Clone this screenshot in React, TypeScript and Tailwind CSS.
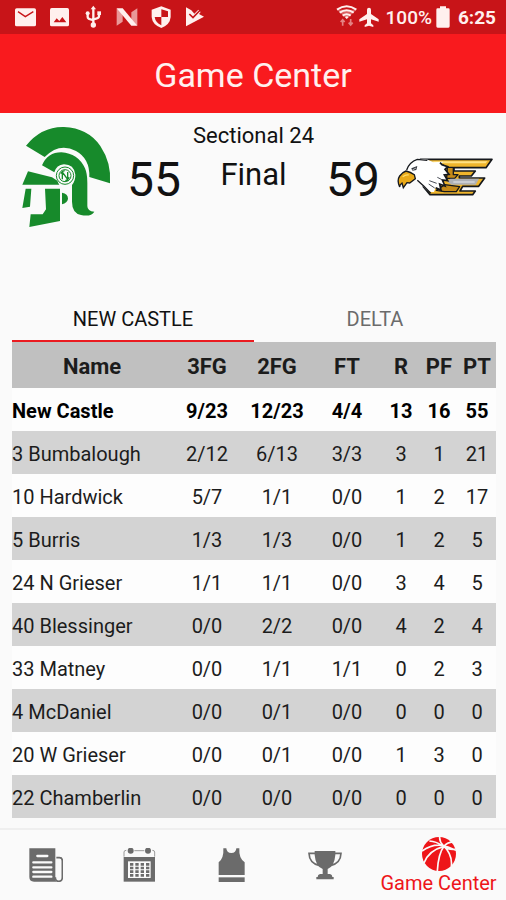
import type { ReactNode } from "react";

type StatLine = {
  name: string;
  stats: string[];
};

const columns = ["3FG", "2FG", "FT", "R", "PF", "PT"];

const team: StatLine = {
  name: "New Castle",
  stats: ["9/23", "12/23", "4/4", "13", "16", "55"],
};

const players: StatLine[] = [
  { name: "3 Bumbalough", stats: ["2/12", "6/13", "3/3", "3", "1", "21"] },
  { name: "10 Hardwick", stats: ["5/7", "1/1", "0/0", "1", "2", "17"] },
  { name: "5 Burris", stats: ["1/3", "1/3", "0/0", "1", "2", "5"] },
  { name: "24 N Grieser", stats: ["1/1", "1/1", "0/0", "3", "4", "5"] },
  { name: "40 Blessinger", stats: ["0/0", "2/2", "0/0", "4", "2", "4"] },
  { name: "33 Matney", stats: ["0/0", "1/1", "1/1", "0", "2", "3"] },
  { name: "4 McDaniel", stats: ["0/0", "0/1", "0/0", "0", "0", "0"] },
  { name: "20 W Grieser", stats: ["0/0", "0/1", "0/0", "1", "3", "0"] },
  { name: "22 Chamberlin", stats: ["0/0", "0/0", "0/0", "0", "0", "0"] },
];

function StatusIcon({ children }: { children: ReactNode }) {
  return (
    <svg viewBox="0 0 72 72" className="h-6 w-6 shrink-0" fill="currentColor" aria-hidden="true">
      {children}
    </svg>
  );
}

function StatusBar() {
  return (
    <div className="flex h-[34px] items-center justify-between bg-[#c81418] pr-[10px] pl-[13px] text-[#fff0ee]">
      <div className="flex items-center gap-[10px]">
        <StatusIcon>
          <rect x="6" y="10" width="63" height="54" rx="5" />
          <path d="M15 20l22 15 24-15" fill="none" stroke="#c81418" strokeWidth="4" />
        </StatusIcon>
        <StatusIcon>
          <rect x="9" y="9" width="57" height="55" rx="5" />
          <path d="M20 52l9-12 8 8 9-12 12 16z" fill="#c81418" />
        </StatusIcon>
        <StatusIcon>
          <path d="M37 2l8 11H29z" />
          <circle cx="37" cy="60" r="8" />
          <circle cx="20" cy="25" r="6" />
          <rect x="49" y="19" width="11" height="11" />
          <path d="M37 10v50M20 28v8q0 7 17 9M54 28v6q0 7-17 9" fill="none" stroke="currentColor" strokeWidth="7" />
        </StatusIcon>
        <StatusIcon>
          <path d="M5 10v52l18-12V22zM67 10v52L49 50V22z" opacity="0.6" />
          <path d="M5 10h18l44 52H49z" />
        </StatusIcon>
        <StatusIcon>
          <path d="M37 4l28 10v22q-2 23-28 33Q10 59 8 36V14z" />
          <path d="M37 13v23h20V19zM17 36h20v25Q19 52 17 36z" fill="#c81418" />
        </StatusIcon>
        <StatusIcon>
          <path d="M9 7l16 9 9 10 12-12 7 7-5 6 15 8L9 64z" />
          <path d="M19 27l11 11 22-23" fill="none" stroke="#c81418" strokeWidth="5" />
        </StatusIcon>
      </div>
      <div className="flex items-center">
        <svg viewBox="0 0 66 72" className="h-6 w-[22px]" fill="none" stroke="currentColor" strokeWidth="6" aria-hidden="true">
          <path d="M3 14h58L32 42z" fill="currentColor" stroke="none" opacity="0.35" />
          <path d="M3 14q29-21 58 0M11 23q21-15 42 0M20 32q12-9 24 0" />
          <path d="M27 36q6-5 11 0l-6 6z" fill="currentColor" stroke="none" />
          <path d="M20 62V44m-6 7l6-7 6 7M44 42v18m-6-7l6 7 6-7" strokeWidth="5" opacity="0.5" />
        </svg>
        <svg viewBox="0 0 66 72" className="h-6 w-[22px]" fill="currentColor" aria-hidden="true">
          <path d="M33 8q6 0 6 6v13l23 16v7l-23-7v12l7 6v5l-13-4-13 4v-5l7-6V43L4 50v-7l23-16V14q0-6 6-6z" />
        </svg>
        <span className="ml-[6px] pt-[2px] text-[19px] leading-6 font-medium">100%</span>
        <svg viewBox="0 0 42 66" className="mx-1 h-[22px] w-[14px]" fill="currentColor" aria-hidden="true">
          <path d="M12 1h18v6h7q4 0 4 4v50q0 4-4 4H5q-4 0-4-4V11q0-4 4-4h7z" />
        </svg>
        <span className="ml-1 pt-[2px] text-[19px] leading-6 font-bold">6:25</span>
      </div>
    </div>
  );
}

function TrojanLogo() {
  return (
    <svg viewBox="0 0 300 336" className="h-[112px] w-[100px] shrink-0" fill="#178a2b" role="img" aria-label="New Castle Trojans">
      <path d="M33 77Q80 19 147 21q72 3 109 57 34 51 29 112l-62-19q2-55-40-78-50-27-94 18z" />
      <path d="M81 136Q98 97 139 97q50 3 71 48 7 16 7 43v70q0 16 21 17-10 16-40 10-27-6-27-40v-50q11-15 10-31-4-31-34-31-23 2-29 24z" />
      <path d="M39 154l72 18 16 10q2 6 6 12H22z" />
      <path d="M32 206h17l-4 54-23 4zM90 206h45v97l-92 18 4-38h36l10-15z" />
      <path d="M141 218q18 3 18 18-2 13-18 17z" />
      <circle cx="150" cy="167" r="26" fill="none" stroke="#178a2b" strokeWidth="3" />
      <circle cx="150" cy="167" r="18" fill="none" stroke="#178a2b" strokeWidth="3" />
      <path d="M142 178v-22l16 22v-22M137 161q5-8 12-9M163 172q-5 9-12 10" fill="none" stroke="#178a2b" strokeWidth="4" />
    </svg>
  );
}

function EagleLogo() {
  return (
    <svg viewBox="0 0 330 162" className="h-[54px] w-[110px] shrink-0" role="img" aria-label="Delta Eagles">
      <g stroke="#15181d" strokeWidth="5" strokeLinejoin="round">
        <path d="M91 28h215l-18 25H192v10h64l-12 15h-36v6h76l-18 25h-48l-8 14h46l-8 11H120l-20-24 60-15V46z" fill="#efb52c" />
        <path d="M172 52h18v22h14l-10 11h-24zM164 104l45 6-10 15h-36l-24-4z" fill="#c58a18" strokeWidth="4" />
      </g>
      <path d="M108 34h184l-5 6H120z" fill="#ffe183" />
      <path d="M181 86h86l-10 18h-72l-13-9z" fill="#aeb1b7" />
      <path d="M190 96h64" stroke="#dadce0" strokeWidth="4" />
      <path
        d="M50 60q8-24 32-32 28-5 47 9l30-2-6 8 20 7-8 8 12 15-14 2 10 17-16-2 8 18-16-6 4 18-16-7-5 13q-16 0-23-7L82 91 50 75z"
        fill="#fff"
      />
      <path d="M50 60q8-24 32-32l30 3M82 91l19 17 21 22" fill="none" stroke="#15181d" strokeWidth="4" />
      <path
        d="M150 38l6 6 17 6-8 8 12 15-14 2 10 17-16-2 8 18-16-6 4 18-16-7"
        fill="none"
        stroke="#15181d"
        strokeWidth="5"
      />
      <path d="M118 92l22 8M116 102l18 12M142 82l12 6" fill="none" stroke="#4a4e57" strokeWidth="3" />
      <path d="M48 63q14 3 25 11l3 12-17 13-8-1-11 15-4-14q-7 4-7 12-9-20 0-33 8-11 19-15z" fill="#e9a918" stroke="#15181d" strokeWidth="4" />
      <path d="M38 80q9-7 18-5" fill="none" stroke="#ffdc67" strokeWidth="4" />
      <path d="M64 55l18-7-3 12-12 2z" fill="#30343c" />
      <path d="M67 60l11-6" stroke="#fff" strokeWidth="2" />
    </svg>
  );
}

function Scoreboard() {
  return (
    <section className="flex h-[182px] items-start pt-[7px] pr-[6px] pl-[15px] text-[#111]">
      <TrojanLogo />
      <span className="ml-3 pt-8 text-[48px] leading-[56px]">55</span>
      <div className="flex flex-1 flex-col items-center whitespace-nowrap">
        <span className="text-[22px] leading-8">Sectional 24</span>
        <span className="pt-[2px] text-[31px] leading-[42px]">Final</span>
      </div>
      <span className="mr-[10px] pt-8 text-[48px] leading-[56px]">59</span>
      <div className="pt-[30px]">
        <EagleLogo />
      </div>
    </section>
  );
}

function StatRow({ line, className }: { line: StatLine; className: string }) {
  return (
    <tr className={`h-[43px] ${className}`}>
      <th scope="row" className="pt-[2px] text-left [font-weight:inherit] whitespace-nowrap">
        {line.name}
      </th>
      {line.stats.map((value, i) => (
        <td key={columns[i]} className="pt-[2px]">
          {value}
        </td>
      ))}
    </tr>
  );
}

function BoxScore() {
  return (
    <div className="pr-[10px] pl-3">
      <div role="tablist" className="grid h-[47px] grid-cols-2 text-[20px]">
        <button role="tab" aria-selected="true" className="border-b-2 border-[#ea1b20] pt-[2px] text-[#111]">
          NEW CASTLE
        </button>
        <button role="tab" aria-selected="false" className="border-b-2 border-transparent pt-[2px] text-[#6b6b6b]">
          DELTA
        </button>
      </div>
      <table className="w-full table-fixed border-collapse text-center text-[20px] leading-6 text-[#1c1c1c]">
        <colgroup>
          <col />
          <col className="w-[70px]" />
          <col className="w-[70px]" />
          <col className="w-[70px]" />
          <col className="w-[38px]" />
          <col className="w-[38px]" />
          <col className="w-[38px]" />
        </colgroup>
        <thead>
          <tr className="h-[46px] bg-[#c0c0c0] text-[22px]">
            <th scope="col" className="pt-1 font-bold">
              Name
            </th>
            {columns.map((column) => (
              <th key={column} scope="col" className="pt-1 font-bold">
                {column}
              </th>
            ))}
          </tr>
        </thead>
        <tbody>
          <StatRow line={team} className="bg-[#fdfdfd] font-bold text-black" />
          {players.map((player, i) => (
            <StatRow key={player.name} line={player} className={i % 2 === 0 ? "bg-[#d3d3d3]" : "bg-[#fdfdfd]"} />
          ))}
        </tbody>
      </table>
    </div>
  );
}

function NewsIcon() {
  return (
    <svg viewBox="0 0 102 102" className="size-[34px]" fill="currentColor" aria-hidden="true">
      <path d="M1 1h78v92q0 8 6 8H15q-14 0-14-14z" />
      <path d="M82 29h9q9 0 9 9v50q0 12-11 12-10 0-10-12" fill="none" stroke="currentColor" strokeWidth="5" />
      <path d="M25 24h30M13 43h54M13 58h54M13 72h54M13 86h54" stroke="#fafafa" strokeWidth="7" strokeLinecap="round" />
    </svg>
  );
}

function CalendarIcon() {
  return (
    <svg viewBox="0 0 102 102" className="size-[34px]" fill="currentColor" aria-hidden="true">
      <path d="M5 27h94v74H5z" />
      <path d="M6 26V12q0-5 7-5M98 26V12q0-5-7-5M37 8h30" fill="none" stroke="currentColor" strokeWidth="2" />
      <circle cx="26" cy="8" r="9" />
      <circle cx="78" cy="8" r="9" />
      <rect x="18" y="40" width="68" height="50" fill="#fafafa" />
      <path d="M24 49h58M24 60h58M24 71h58M24 82h58" stroke="currentColor" strokeWidth="8" strokeDasharray="10 6" />
    </svg>
  );
}

function JerseyIcon() {
  return (
    <svg viewBox="0 0 102 102" className="size-[34px]" fill="currentColor" aria-hidden="true">
      <path d="M25 1h9q1 14 15 14T64 1h9q-2 30 16 42v38H11V43Q27 31 25 1z" />
      <path d="M11 88h78v14H11z" />
    </svg>
  );
}

function TrophyIcon() {
  return (
    <svg viewBox="0 0 102 102" className="size-[34px]" fill="currentColor" aria-hidden="true">
      <path d="M20 9h62v12q-3 35-23 42v15h7q7 2 7 9h4v7H25v-7h4q0-7 7-9h8V63Q23 56 20 21z" />
      <path d="M23 16H3q1 31 32 37M79 16h20q-1 31-32 37" fill="none" stroke="currentColor" strokeWidth="5" />
    </svg>
  );
}

function BasketballIcon() {
  return (
    <svg viewBox="0 0 102 102" className="size-[34px]" fill="currentColor" aria-hidden="true">
      <circle cx="51" cy="51" r="51" />
      <path
        d="M0 42Q28 22 58 25q20 3 44 15M22 12q22 2 36 13 18 14 42 12M53 0q-1 14 11 26 28 26 24 62M94 14Q74 17 66 28 49 50 46 102M6 78Q20 40 66 28"
        fill="none"
        stroke="#fafafa"
        strokeWidth="5"
      />
    </svg>
  );
}

function NavItem({ label, children }: { label: string; children: ReactNode }) {
  return (
    <a href="#" aria-label={label} className="flex items-center justify-center">
      {children}
    </a>
  );
}

function BottomNav() {
  return (
    <nav className="grid h-[72px] grid-cols-[11fr_11fr_11fr_11fr_16fr] border-t-2 border-[#efefef] text-[#6b6b6b]">
      <NavItem label="News">
        <NewsIcon />
      </NavItem>
      <NavItem label="Schedule">
        <CalendarIcon />
      </NavItem>
      <NavItem label="Roster">
        <JerseyIcon />
      </NavItem>
      <NavItem label="Standings">
        <TrophyIcon />
      </NavItem>
      <a href="#" aria-current="page" className="flex flex-col items-center pt-[7px] text-[#ee1519]">
        <BasketballIcon />
        <span className="text-[20px] leading-6 whitespace-nowrap">Game Center</span>
      </a>
    </nav>
  );
}

export default function App() {
  return (
    <div className="flex min-h-screen flex-col bg-[#fafafa] font-['Roboto',sans-serif]">
      <StatusBar />
      <header className="flex h-[79px] items-center justify-center bg-[#f91a1e]">
        <h1 className="pt-[2px] text-[34px] leading-10 text-[#fff0ee]">Game Center</h1>
      </header>
      <main className="flex-1">
        <Scoreboard />
        <BoxScore />
      </main>
      <BottomNav />
    </div>
  );
}
